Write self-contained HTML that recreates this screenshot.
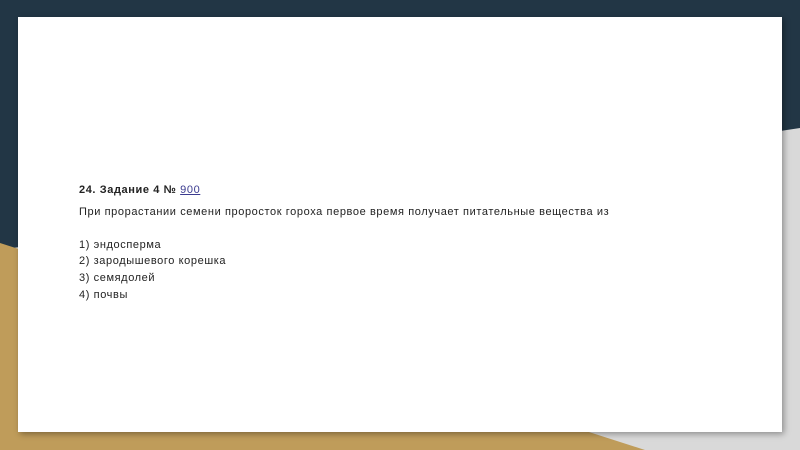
<!DOCTYPE html>
<html><head><meta charset="utf-8"><style>
body{margin:0;width:800px;height:450px;overflow:hidden;position:relative;background:#d9d9d9;font-family:"Liberation Sans",sans-serif;}
svg{position:absolute;left:0;top:0}
.card{position:absolute;left:18px;top:17px;width:764px;height:415px;background:#fff;box-shadow:2px 2px 6px rgba(0,0,0,.35);}
.t{position:absolute;left:79px;font-size:11px;color:#222;white-space:nowrap;letter-spacing:0.6px}
b{font-weight:bold}
a{color:#3b3b8f;text-decoration:underline}
</style></head><body>
<svg width="800" height="450">
<polygon points="0,0 800,0 800,128 0,250" fill="#223645"/>
<polygon points="0,243 645,450 0,450" fill="#bf9c5a"/>
</svg>
<div class="card"></div>
<div class="t" style="top:184px"><b>24. Задание 4 № </b><a>900</a></div>
<div class="t" style="top:206px">При прорастании семени проросток гороха первое время получает питательные вещества из</div>
<div class="t" style="top:239px">1) эндосперма</div>
<div class="t" style="top:255px">2) зародышевого корешка</div>
<div class="t" style="top:272px">3) семядолей</div>
<div class="t" style="top:289px">4) почвы</div>
</body></html>
